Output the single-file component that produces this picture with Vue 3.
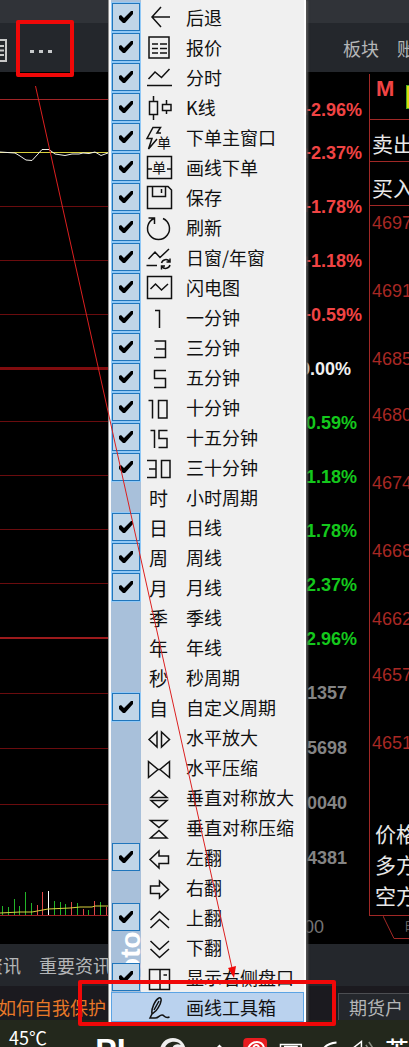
<script setup>
import { ref } from 'vue'

const items = ref([
  { label: '后退', on: true, d: 'M16 4L7 14L16 24M7 14H25' },
  { label: '报价', on: true, d: 'M4 4H24V25H4ZM7 11H13M15 11H22M7 15.5H13M15 15.5H22M7 20H13M15 20H22' },
  { label: '分时', on: true, d: 'M3.5 16L10 9L16.5 14.5L24.5 6M2 22.5H27' },
  { label: 'K线', on: true, d: 'M4.5 8.5H12.5V21.5H4.5ZM8.5 3V8M8.5 22V27M17.5 11.5H26V17.5H17.5ZM21.5 7V11M21.5 18V21' },
  { label: '下单主窗口', on: true, d: 'M16 10L12 10L15.5 4.5H8L2 15.5H7L3.5 26L12 16', glyph: '单', kind: 'small-right' },
  { label: '画线下单', on: true, d: 'M2.5 3.5H26.5V25.5H2.5ZM3 16H7M22 16H26', glyph: '单', kind: 'small' },
  { label: '保存', on: true, d: 'M2.5 3.5H23L26.5 7V25.5H2.5ZM7.5 3.5V13.5H20.5V3.5M16.5 6V10' },
  { label: '刷新', on: true, d: 'M9 5.5A11 11 0 1 0 18 5.5M3.5 5H9.5V11' },
  { label: '日窗/年窗', on: true, d: 'M3.5 16L10 9L15 14.5L24 6M1.5 22.5H12M16.5 20A4.5 4.5 0 0 1 24.5 18.5M25 15.5V19H21.5M25 22A4.5 4.5 0 0 1 17 23.5M16.5 26.5V23H20' },
  { label: '闪电图', on: true, d: 'M2.5 3.5H26.5V25.5H2.5ZM5.5 16L10.5 11L16.5 17L23 11' },
  { label: '一分钟', on: true, d: 'M10 7.5H14.5V25' },
  { label: '三分钟', on: true, d: 'M9.5 8H20.5V24.5H9M11 16H20' },
  { label: '五分钟', on: true, d: 'M21 7.5H9.5V15.5H20.5V24.5H9' },
  { label: '十分钟', on: true, d: 'M3.5 7.5H7.5V25.5M13.5 7.5H22V25H13.5Z' },
  { label: '十五分钟', on: true, d: 'M5.5 7.5H9.5V25M22.5 7.5H14V15.5H22V24.5H13.5' },
  { label: '三十分钟', on: true, d: 'M2 7.5H11V24.5H2M4 16H11M16.5 7.5H25V24.5H16.5Z' },
  { label: '小时周期', on: false, glyph: '时' },
  { label: '日线', on: true, glyph: '日' },
  { label: '周线', on: true, glyph: '周' },
  { label: '月线', on: true, glyph: '月' },
  { label: '季线', on: false, glyph: '季' },
  { label: '年线', on: false, glyph: '年' },
  { label: '秒周期', on: false, glyph: '秒' },
  { label: '自定义周期', on: true, glyph: '自' },
  { label: '水平放大', on: false, d: 'M4 16.5L12 9V24ZM16.5 9L24.5 16.5L16.5 24Z' },
  { label: '水平压缩', on: false, d: 'M3.5 8.5L13 16.5L3.5 24.5ZM24.5 8.5L15 16.5L24.5 24.5ZM13 16.5H15' },
  { label: '垂直对称放大', on: false, d: 'M14 7.5L22 14.5H6ZM6 17.5H22L14 24.5Z' },
  { label: '垂直对称压缩', on: false, d: 'M5.5 7.5H22L14 14.5ZM14 17.5L22 25H5.5Z' },
  { label: '左翻', on: true, d: 'M5 16.5L14 8V13H23.5V20.5H14V25Z' },
  { label: '右翻', on: false, d: 'M23.5 16.5L14.5 8V13H5.5V20.5H14.5V25Z' },
  { label: '上翻', on: true, d: 'M5.5 17L14.5 8.5L24 17M5.5 25L14.5 16.5L24 25' },
  { label: '下翻', on: false, d: 'M5.5 8L14.5 16.5L24 8M5.5 16L14.5 24.5L24 16' },
  { label: '显示右侧盘口', on: true, d: 'M4.5 6.5H24.5V26.5H4.5ZM15 6.5V26.5M18.5 12H22M18.5 19H22' },
  { label: '画线工具箱', on: false, active: true, d: 'M7 21C6 16 10 7 14 5C17 4 17 9 13 15C11 19 8 20 7 21L5 25H10C14 25 14 22 17 22S19 26 24.5 24M9 17L14 8' }
])

const scale = [
  { t: '+2.96%', c: 'up first' }, { t: '+2.37%', c: 'up' }, { t: '+1.78%', c: 'up' },
  { t: '+1.18%', c: 'up' }, { t: '+0.59%', c: 'up' }, { t: '0.00%', c: 'flat' },
  { t: '-0.59%', c: 'down' }, { t: '-1.18%', c: 'down' }, { t: '-1.78%', c: 'down' },
  { t: '-2.37%', c: 'down' }, { t: '-2.96%', c: 'down' },
  { t: '1357', c: 'vol' }, { t: '5698', c: 'vol' }, { t: '0040', c: 'vol' },
  { t: '4381', c: 'vol' }, { t: '00', c: 'time' }
]

const dimLines = [134, 188, 242, 349, 403, 457, 511, 621, 676, 732, 787]

const bars = [
  [2, 9, 'g'], [8, 8, 'g'], [14, 16, 'g'], [19, 9, 'g'], [25, 23, 'g'], [31, 12, 'g'],
  [37, 10, 'r'], [42, 23, 'r'], [48, 24, 'w'], [54, 14, 'g'], [60, 13, 'g'], [65, 11, 'g'],
  [71, 13, 'r'], [77, 12, 'g'], [83, 6, 'r'], [88, 5, 'g'], [94, 14, 'r'], [100, 13, 'g'], [106, 8, 'r']
]

const ladder = [4697, 4691, 4685, 4680, 4674, 4668, 4662, 4657, 4651]
</script>

<template>
  <div class="screen">
    <div class="titlebar"></div>
    <header class="toolbar">
      <button class="tool list" aria-label="列表">
        <svg width="8" height="24" viewBox="0 0 8 24"><path d="M0 1H6V22H0M0 7H4M0 11.500H4M0 16H4" /></svg>
      </button>
      <button class="tool more" aria-label="更多"><i></i><i></i><i></i></button>
      <nav class="tabs">
        <button class="tool">板块</button>
        <button class="tool">账户</button>
      </nav>
    </header>

    <main class="market">
      <section class="chart">
        <svg class="plot" width="306" height="872" viewBox="0 0 306 872">
          <path v-for="y in dimLines" :key="y" class="dim" :d="`M0 ${y}.5H306`" />
          <path class="top" d="M0 27.500H306" />
          <path class="mid" d="M0 296.500H306" />
          <path class="low" d="M0 566H306" />
          <path class="avg" d="M0 80.500H306" />
          <path class="price" d="M0 80L15 81L20 84L26 88L32 88.500L38 82L42 77.500H49L55 82L65 83.500L72 82H79L83 81L89 81.500L95 80L101 83.500L108 81" />
          <rect v-for="b in bars" :key="b[0]" :class="b[2]" :x="b[0]" :y="843 - b[1]" width="1" :height="b[1]" />
          <path class="avg" d="M0 841L20 840H32L48 837L70 836L80 835H92L95 834H108" />
          <path class="base" d="M0 843.500H306" />
        </svg>
        <ul class="scale">
          <li v-for="(s, i) in scale" :key="i" :class="s.c">{{ s.t }}</li>
        </ul>
      </section>

      <aside class="quote">
        <div class="panel">
          <div class="head"><b>M</b><span class="flag"></span></div>
          <div class="side">卖出</div>
          <div class="side buy">买入</div>
          <ol class="ladder">
            <li v-for="p in ladder" :key="p" :class="{ short: p === 4685 || p === 4662 }">{{ p }}</li>
          </ol>
          <div class="totals">
            <p>价格</p>
            <p>多方</p>
            <p>空方</p>
          </div>
        </div>
        <div class="sheet">
          <svg width="26" height="28" viewBox="0 0 26 28"><path d="M0 0L11 22.500H26" /></svg>
          <span>时</span>
        </div>
      </aside>
    </main>

    <nav class="news">
      <a href="#">资讯</a>
      <a href="#">重要资讯</a>
    </nav>
    <div class="ticker">
      <a href="#">如何自我保护</a>
      <button class="account">期货户</button>
    </div>

    <footer class="taskbar">
      <span class="temp">45℃</span>
      <b class="app">PL</b>
      <svg class="tray" width="200" height="15" viewBox="155 1032 200 15">
        <circle cx="174" cy="1051" r="13" fill="#eee" />
        <path d="M166 1048C168 1041 179 1040 182 1045C177 1043 172 1046 174 1051Z" fill="#23281c" />
        <path d="M215 1052L221 1046L227 1052" fill="none" stroke="#fff" stroke-width="2" />
        <rect x="245" y="1038" width="24" height="20" rx="4" fill="#e81c20" />
        <path d="M250 1048C254 1040 264 1040 266 1048M255 1048C256 1044 260 1044 261 1048" fill="none" stroke="#fff" stroke-width="2" />
        <path d="M282.500 1055V1044.500H303.500V1055M286 1046.500H300" fill="none" stroke="#fff" stroke-width="1.500" />
        <path d="M325 1050C328 1045 333 1043 339 1042.500" fill="none" stroke="#fff" stroke-width="2" />
      </svg>
      <svg class="sound" width="24" height="15" viewBox="353 1032 24 15">
        <path d="M353 1049L362.500 1041.500V1050" fill="none" stroke="#fff" stroke-width="1.500" />
        <path d="M367 1045L369 1048M370 1042L374 1048" fill="none" stroke="#8c9085" stroke-width="1.500" />
      </svg>
      <span class="ime">英</span>
    </footer>

    <div class="menu">
      <span class="watermark">hoto</span>
      <label v-for="it in items" :key="it.label" class="item" :class="{ on: it.on, active: it.active }">
        <span class="gutter"><input v-model="it.on" type="checkbox" /></span>
        <svg class="icon" width="28" height="28" viewBox="0 0 28 28" aria-hidden="true">
          <path v-if="it.d" :d="it.d" />
          <text v-if="it.glyph && it.kind === 'small-right'" class="small" x="12" y="25">{{ it.glyph }}</text>
          <text v-else-if="it.glyph && it.kind === 'small'" class="small" x="7" y="20">{{ it.glyph }}</text>
          <text v-else-if="it.glyph" x="4" y="23">{{ it.glyph }}</text>
        </svg>
        <span class="name">{{ it.label }}</span>
      </label>
    </div>

    <div class="mark mark-more"></div>
    <div class="mark mark-item"></div>
    <svg class="arrow" width="240" height="980" viewBox="0 0 240 980">
      <path class="shaft" d="M35.500 86L232 968" />
      <path class="tip" d="M228 968L236 966L234 978Z" />
    </svg>
  </div>
</template>

<style>
body {
  margin: 0;
  background: #000;
}
</style>

<style scoped>
.screen {
  position: relative;
  display: flex;
  flex-direction: column;
  min-height: 100vh;
  overflow: hidden;
  background: #000;
  font-family: "Noto Sans CJK SC", sans-serif;
  font-size: 18px;
}
button {
  border: 0;
  padding: 0;
  background: none;
  font: inherit;
  color: inherit;
}
a {
  color: inherit;
  text-decoration: none;
}
ul, ol, p {
  margin: 0;
  padding: 0;
  list-style: none;
}
.titlebar {
  height: 23px;
  background: #303338;
}
.toolbar {
  display: flex;
  align-items: center;
  height: 49px;
  background: #24272c;
  color: #b4b6b8;
}
.tool {
  white-space: nowrap;
}
.list {
  display: flex;
  margin-top: 6px;
}
.list path {
  fill: none;
  stroke: #c8c8c8;
  stroke-width: 2;
}
.more {
  display: flex;
  gap: 5px;
  margin: 8px 0 0 22px;
}
.more i {
  width: 4px;
  height: 3px;
  background: #c8cacc;
}
.tabs {
  display: flex;
  gap: 18px;
  margin-left: 291px;
}
.market {
  display: flex;
  flex: 1;
}
.chart {
  position: relative;
  flex: 0 0 369px;
}
.plot {
  position: absolute;
  left: 0;
  top: 0;
}
.plot path {
  fill: none;
}
.plot .dim { stroke: #6a0c0e; }
.plot .top, .plot .base { stroke: #a02426; }
.plot .mid { stroke: #800c0e; stroke-width: 3; }
.plot .low { stroke: #9c1a1c; stroke-width: 2; }
.plot .avg { stroke: #d8d03c; }
.plot .price { stroke: #f0f0e8; }
.g { fill: #22b428; }
.r { fill: #e04848; }
.w { fill: #fff; }
.scale {
  position: relative;
  font: bold 18px "Liberation Sans", sans-serif;
  text-align: right;
}
.scale li {
  box-sizing: border-box;
  height: 54px;
  line-height: 54px;
}
.scale .first {
  padding-top: 11px;
}
.up { color: #f04444; padding-right: 7px; }
.flat { color: #f0f0f0; padding-right: 18px; }
.down { color: #14c81c; padding-right: 12px; }
.scale .vol { height: 55px; line-height: 55px; color: #848484; padding-right: 22px; }
.scale .time { padding: 14px 45px 0 0; color: #747474; font-weight: normal; }
.quote {
  display: flex;
  flex: 1;
  flex-direction: column;
  min-width: 0;
  overflow: hidden;
  white-space: nowrap;
}
.panel {
  display: flex;
  flex: 1;
  flex-direction: column;
  margin-top: 2px;
  border: solid #a02826;
  border-width: 0 0 1px 1px;
}
.head {
  display: flex;
  gap: 12px;
  height: 45px;
  padding-left: 6px;
  color: #f04444;
  font: bold 22px/30px "Liberation Sans", sans-serif;
}
.flag {
  flex: 0 0 16px;
  height: 22px;
  margin-top: 11px;
  border: 1px solid #50b020;
  background: #dcdc10;
}
.side {
  height: 41px;
  padding-left: 2px;
  border-top: 1px solid #a02826;
  color: #e8e8e8;
  font-size: 21px;
  line-height: 46px;
}
.buy {
  height: 43px;
  line-height: 50px;
}
.ladder {
  padding-left: 2px;
  border-top: 1px solid #a02826;
  color: #a82824;
  font: 18px/34px "Liberation Sans", sans-serif;
}
.ladder li { height: 68px; }
.ladder .short { height: 56px; }
.ladder li:last-child { height: 34px; }
.totals {
  margin-top: auto;
  padding: 0 0 4px 5px;
  color: #e8e8e8;
  font-size: 21px;
  line-height: 31px;
}
.sheet {
  display: flex;
  height: 28px;
  padding-left: 14px;
  color: #707070;
  font-size: 13px;
  line-height: 20px;
}
.sheet svg {
  flex: none;
  margin-right: -4px;
}
.sheet path {
  fill: none;
  stroke: #a02826;
}
.news {
  display: flex;
  align-items: center;
  gap: 18px;
  height: 42px;
  background: #24272c;
  color: #b4b6b8;
}
.news a:first-child {
  margin-left: -15px;
}
.ticker {
  display: flex;
  align-items: center;
  justify-content: space-between;
  height: 34px;
  overflow: hidden;
  background: #1b1a1f;
  color: #e87828;
  white-space: nowrap;
}
.ticker a {
  margin-left: -2px;
  padding-top: 8px;
}
.account {
  align-self: flex-end;
  width: 71px;
  height: 27px;
  padding-left: 10px;
  border: 1px solid #4c4e52;
  border-width: 1px 0 0 1px;
  background: #24272c;
  color: #b4b6b8;
  line-height: 26px;
  text-align: left;
}
.taskbar {
  display: flex;
  height: 27px;
  overflow: hidden;
  background: #23281c;
  color: #fff;
}
.temp {
  width: 87px;
  padding-left: 9px;
  line-height: 34px;
}
.app {
  width: 59px;
  font: bold 32px/60px "Liberation Sans", sans-serif;
}
.tray {
  margin-top: 12px;
}
.sound {
  margin: 12px 9px 0 0;
}
.ime {
  font-size: 24px;
  font-weight: 500;
  line-height: 58px;
}
.menu {
  position: absolute;
  left: 108px;
  top: 0;
  box-sizing: border-box;
  width: 198px;
  padding: 2px 2px 0 2px;
  border-left: 1px solid #909090;
  background: linear-gradient(90deg, #f8f8f8 2px, #a8c0da 2px, #a8c0da 32px, #f0f0f0 32px, #f0f0f0 195px, #fff 195px);
  box-shadow: 2px 0 2px #555;
  color: #111;
}
.watermark {
  position: absolute;
  left: 8px;
  top: 932px;
  height: 60px;
  font: bold 28px/28px "Liberation Sans", sans-serif;
  color: #fff;
  writing-mode: vertical-rl;
  rotate: 180deg;
}
.item {
  position: relative;
  display: flex;
  align-items: center;
  height: 30px;
}
.active {
  box-sizing: border-box;
  border: 1px solid #5ca4e4;
  background: #bad2ee;
}
.gutter {
  display: flex;
  align-items: center;
  justify-content: center;
  width: 30px;
  height: 30px;
}
.active .gutter {
  width: 29px;
  height: 28px;
}
.on .gutter {
  background: #90c8f6;
}
.on:nth-child(n + 26) .gutter {
  background: none;
}
input {
  appearance: none;
  box-sizing: border-box;
  width: 28px;
  height: 28px;
  margin: 0;
}
input:checked {
  border: 1px solid #2076bc;
  background: #c0d5e7;
}
input:checked::before {
  content: "";
  display: block;
  width: 26px;
  height: 26px;
  background: #000;
  clip-path: polygon(6px 12px, 8px 11px, 11px 14px, 18px 7px, 20px 7px, 20px 10px, 12px 19px, 10px 19px, 6px 15px);
}
.icon {
  flex: none;
  margin: 0 13px 0 4px;
}
.icon path {
  fill: none;
  stroke: #111;
  stroke-width: 1.5;
}
.icon text {
  font-size: 19px;
  fill: #111;
}
.icon .small {
  font-size: 14px;
}
.name {
  white-space: nowrap;
  line-height: 30px;
}
.mark {
  position: absolute;
  box-sizing: border-box;
  border: 4px solid #f00808;
  border-radius: 2px;
}
.mark-more {
  left: 16px;
  top: 20px;
  width: 58px;
  height: 57px;
}
.mark-item {
  left: 78px;
  top: 980px;
  width: 258px;
  height: 46px;
}
.arrow {
  position: absolute;
  left: 0;
  top: 0;
  pointer-events: none;
}
.shaft {
  stroke: #dc2020;
}
.tip {
  fill: #f00808;
}
</style>
